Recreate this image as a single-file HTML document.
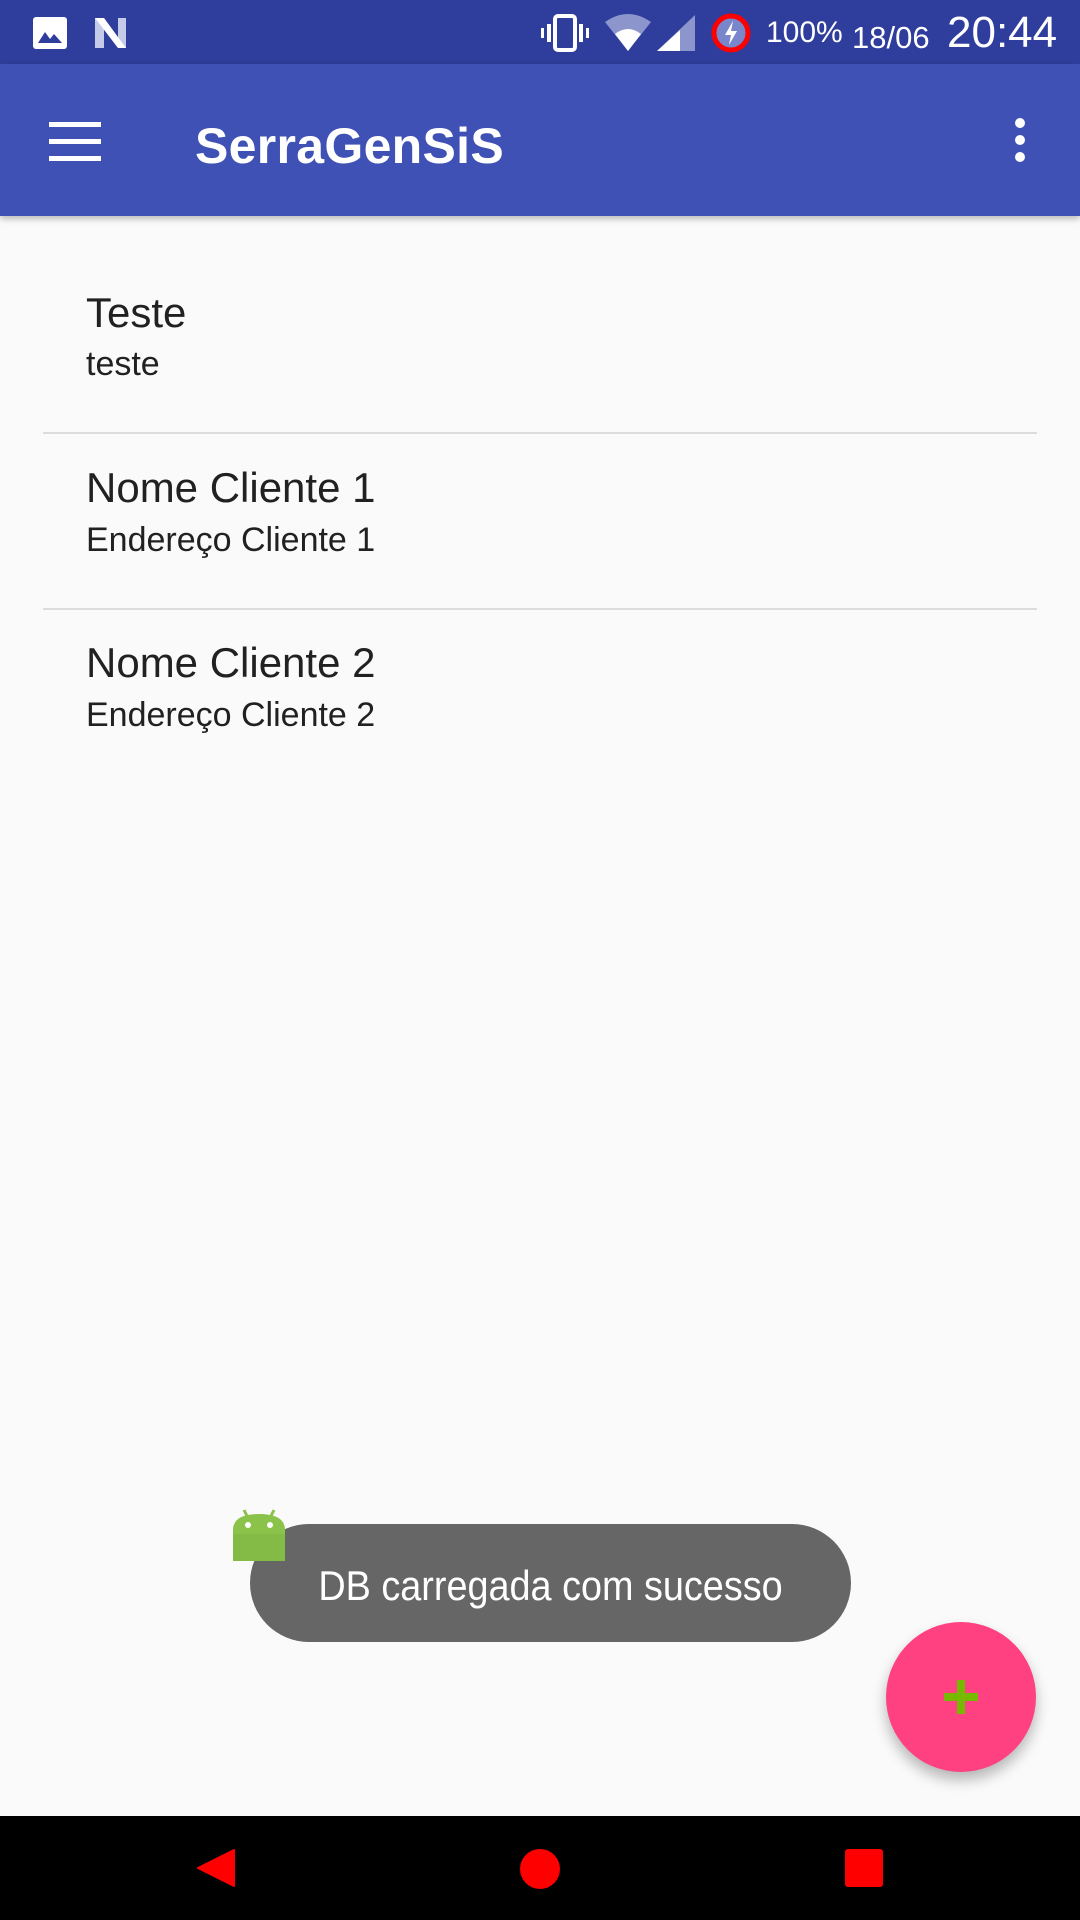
<!DOCTYPE html>
<html><head><meta charset="utf-8"><style>
*{margin:0;padding:0;box-sizing:border-box}
body{width:1080px;height:1920px;position:relative;overflow:hidden;background:#fafafa;font-family:"Liberation Sans",sans-serif}
.abs{position:absolute}
.sb{left:0;top:0;width:1080px;height:64px;background:#2f3d9c}
.tb{left:0;top:64px;width:1080px;height:152px;background:#3f51b5;box-shadow:0 3px 6px rgba(0,0,0,.25)}
.t{color:#212121;white-space:nowrap}
.div{left:43px;width:994px;height:2px;background:#dcdcdc}
</style></head><body>
<div class="abs sb">
 <svg class="abs" style="left:32px;top:16px" width="36" height="34" viewBox="0 0 36 34"><rect x="1" y="1" width="34" height="32" rx="3" fill="#fff"/><path d="M6 27 L13 16 L18 23 L22 18 L30 27Z" fill="#2f3d9c"/></svg>
 <svg class="abs" style="left:94px;top:16px" width="40" height="34" viewBox="0 0 40 34"><path d="M1 2h9l14 20V2h8v30h-8L10 12v20H1z" fill="#c5cae9"/><path d="M1 2h9l22 30h-8z" fill="#fff"/></svg>
 <svg class="abs" style="left:540px;top:14px" width="50" height="38" viewBox="0 0 50 38"><rect x="15" y="2" width="20" height="34" rx="3" fill="none" stroke="#fff" stroke-width="4"/><rect x="7" y="10" width="4" height="18" fill="#fff"/><rect x="39" y="10" width="4" height="18" fill="#fff"/><rect x="1" y="14" width="3" height="10" fill="#fff"/><rect x="46" y="14" width="3" height="10" fill="#fff"/></svg>
 <svg class="abs" style="left:604px;top:14px" width="48" height="38" viewBox="0 0 48 38"><path d="M24 37 L1 8 Q24 -8 47 8Z" fill="#8c96cc"/><path d="M24 37 L11 20 Q24 10 37 20Z" fill="#fff"/></svg>
 <svg class="abs" style="left:656px;top:14px" width="40" height="38" viewBox="0 0 40 38"><path d="M39 1V37H1Z" fill="#8c96cc"/><path d="M24 16V37H1Z" fill="#fff"/></svg>
 <svg class="abs" style="left:710px;top:12px" width="42" height="42" viewBox="0 0 42 42"><circle cx="21" cy="21" r="17" fill="#7986cb" stroke="#f00" stroke-width="5"/><path d="M23 9 L15 23 H21 L19 33 L27 19 H21Z" fill="#fff"/></svg>
 <div class="abs" style="left:766px;top:16px;color:#fff;font-size:30px">100%</div>
 <div class="abs" style="left:852px;top:20px;color:#fff;font-size:31px">18/06</div>
 <div class="abs" style="left:947px;top:8px;color:#fff;font-size:44px">20:44</div>
</div>
<div class="abs tb">
 <div class="abs" style="left:49px;top:58px;width:52px;height:5px;background:#fff"></div>
 <div class="abs" style="left:49px;top:75px;width:52px;height:5px;background:#fff"></div>
 <div class="abs" style="left:49px;top:92px;width:52px;height:5px;background:#fff"></div>
 <div class="abs" style="left:195px;top:53px;color:#fff;font-size:50px;font-weight:bold;letter-spacing:.3px">SerraGenSiS</div>
 <div class="abs" style="left:1015px;top:54px;width:10px;height:10px;border-radius:50%;background:#fff;box-shadow:0 17px 0 #fff,0 34px 0 #fff"></div>
</div>
<div class="abs t" style="left:86px;top:289px;font-size:42px">Teste</div>
<div class="abs t" style="left:86px;top:345px;font-size:34px">teste</div>
<div class="abs div" style="top:432px"></div>
<div class="abs t" style="left:86px;top:464px;font-size:42px">Nome Cliente 1</div>
<div class="abs t" style="left:86px;top:521px;font-size:34px">Endereço Cliente 1</div>
<div class="abs div" style="top:608px"></div>
<div class="abs t" style="left:86px;top:639px;font-size:42px">Nome Cliente 2</div>
<div class="abs t" style="left:86px;top:696px;font-size:34px">Endereço Cliente 2</div>
<div class="abs" style="left:250px;top:1524px;width:601px;height:118px;border-radius:59px;background:#666"></div>
<div class="abs" style="left:250px;top:1562px;width:601px;text-align:center;color:#fff;font-size:42px;transform:scaleX(.9)">DB carregada com sucesso</div>
<svg class="abs" style="left:232px;top:1504px" width="54" height="58" viewBox="0 0 54 58"><path d="M12 6 L16 14 M42 6 L38 14" stroke="#8bc34a" stroke-width="3"/><path d="M1 57 V26 Q1 10 27 10 Q53 10 53 26 V57Z" fill="#8bc34a"/><rect x="1" y="30" width="52" height="27" fill="#7cb342" opacity=".5"/><circle cx="16" cy="21" r="3" fill="#fff"/><circle cx="38" cy="21" r="3" fill="#fff"/></svg>
<div class="abs" style="left:886px;top:1622px;width:150px;height:150px;border-radius:50%;background:#ff4081;box-shadow:0 8px 14px rgba(0,0,0,.28)"></div>
<div class="abs" style="left:944px;top:1693px;width:34px;height:8px;background:#76b900"></div>
<div class="abs" style="left:957px;top:1680px;width:8px;height:34px;background:#76b900"></div>
<div class="abs" style="left:0;top:1816px;width:1080px;height:104px;background:#000"></div>
<svg class="abs" style="left:196px;top:1848px" width="40" height="40" viewBox="0 0 40 40"><path d="M38 2 V38 L2 20Z" fill="#f00" stroke="#f00" stroke-width="2" stroke-linejoin="round"/></svg>
<div class="abs" style="left:520px;top:1849px;width:40px;height:40px;border-radius:50%;background:#f00"></div>
<div class="abs" style="left:845px;top:1849px;width:38px;height:38px;border-radius:3px;background:#f00"></div>
</body></html>
